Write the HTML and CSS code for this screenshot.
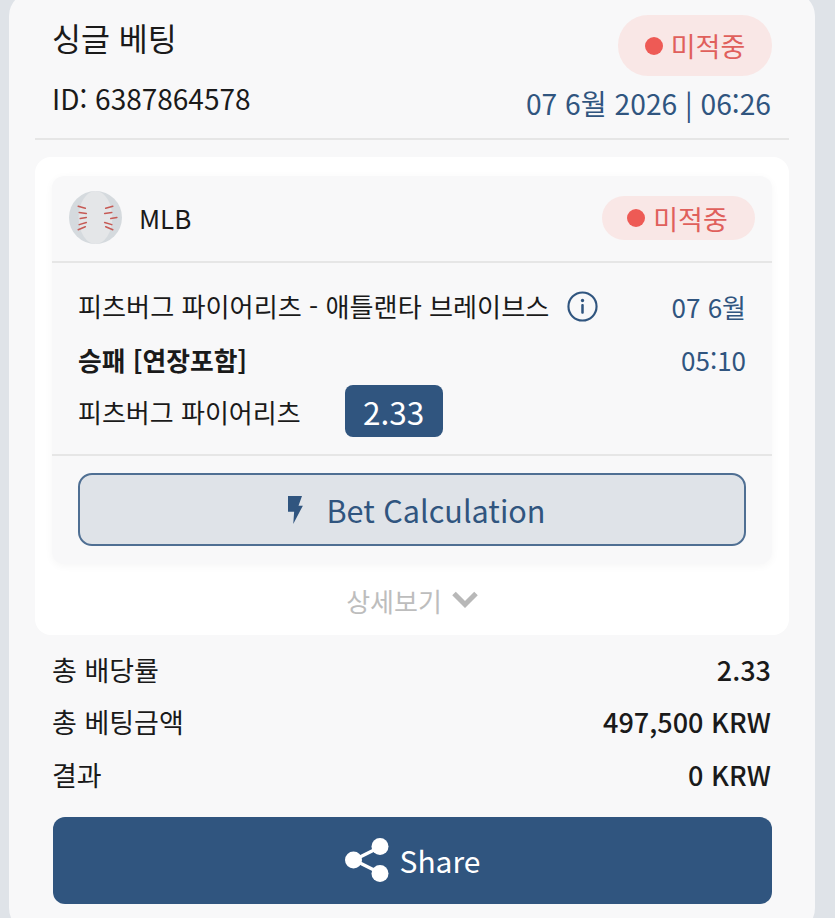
FILE: index.html
```html
<!DOCTYPE html>
<html lang="ko">
<head>
<meta charset="utf-8">
<title>싱글 베팅</title>
<link rel="stylesheet" href="styles.css">
</head>
<body>
<main class="card">
  <header class="head">
    <div class="head-row top">
      <h1 class="title">싱글 베팅</h1>
      <span class="pill pill-lg"><i class="dot"></i>미적중</span>
    </div>
    <div class="head-row meta">
      <span class="id">ID: 6387864578</span>
      <span class="date">07 6월 2026 | 06:26</span>
    </div>
  </header>
  <section class="panel">
    <div class="event">
      <div class="league">
        <div class="league-name">
          <svg class="ball" viewBox="0 0 52 52" aria-hidden="true">
            <circle cx="26" cy="26" r="26" fill="#d5dade"/>
            <ellipse cx="26" cy="26" rx="16.500" ry="26" fill="#e4e6e8"/>
            <g fill="none" stroke="#c65a55" stroke-width="1.500" stroke-linecap="round">
              <path d="M9 15l7 2M10 21l7 1M11 27l6-1M10 33l7-2M9 38l7-3"/>
              <path d="M43 15l-7 2M42 21l-7 1M41 27l6-1M42 33l-7-2M43 38l-7-3"/>
            </g>
          </svg>
          <span class="league-text">MLB</span>
        </div>
        <span class="pill pill-sm"><i class="dot"></i>미적중</span>
      </div>
      <div class="match">
        <div class="match-row first">
          <span class="teams">피츠버그 파이어리츠 - 애틀랜타 브레이브스
            <svg class="info" viewBox="0 0 32 32" aria-hidden="true">
              <circle cx="16" cy="16" r="14.5" fill="none" stroke="#30557f" stroke-width="2.2"/>
              <circle cx="16" cy="9.8" r="1.7" fill="#30557f"/>
              <rect x="14.7" y="13.4" width="2.6" height="10" rx="1" fill="#30557f"/>
            </svg>
          </span>
          <span class="when">07 6월</span>
        </div>
        <div class="match-row">
          <strong class="market">승패 [연장포함]</strong>
          <span class="when">05:10</span>
        </div>
        <div class="pick">
          <span class="pick-name">피츠버그 파이어리츠</span>
          <span class="odds">2.33</span>
        </div>
      </div>
      <div class="calc-wrap">
        <button class="calc" type="button">
          <svg class="bolt" viewBox="0 0 18 32" aria-hidden="true"><path d="M1 0H17L13 11H18L7 32L8 18H1Z" fill="#30557f"/></svg>
          Bet Calculation
        </button>
      </div>
    </div>
    <div class="more">상세보기
      <svg class="chev" viewBox="0 0 26 18" aria-hidden="true"><path d="M2 2.500L13 13.500L24 2.500" fill="none" stroke="#b8b8b8" stroke-width="5"/></svg>
    </div>
  </section>
  <dl class="totals">
    <div class="total"><dt>총 배당률</dt><dd>2.33</dd></div>
    <div class="total"><dt>총 베팅금액</dt><dd>497,500 KRW</dd></div>
    <div class="total"><dt>결과</dt><dd>0 KRW</dd></div>
  </dl>
  <button class="share" type="button">
    <svg class="share-icon" viewBox="0 0 44 44" aria-hidden="true">
      <path d="M35 9L9 22L35 35" fill="none" stroke="#fff" stroke-width="3.400"/>
      <circle cx="35" cy="8.500" r="8.500" fill="#fff"/>
      <circle cx="8.500" cy="22" r="8.500" fill="#fff"/>
      <circle cx="35" cy="35.500" r="8.500" fill="#fff"/>
    </svg>
    Share
  </button>
</main>
</body>
</html>
```
FILE: styles.css
```css
* { box-sizing: border-box; }
html, body { margin: 0; height: 918px; overflow: hidden; }
body {
  background: #dfe3e8;
  color: #1a1a1a;
  font-family: "Noto Sans CJK KR", "Noto Sans", sans-serif;
  padding: 0 20px 0 9px;
}
.card {
  margin-top: -8px;
  height: 940px;
  background: #f8f8f9;
  border-radius: 24px;
  padding: 23px 26px 0;
}
.head { padding: 0 17px; border-bottom: 2px solid #e6e6e6; height: 125px; }
.head-row { display: flex; justify-content: space-between; }
.head-row.top { align-items: flex-start; height: 61px; }
.title { margin: 0; font-size: 31.500px; font-weight: 400; line-height: 44px; }
.pill {
  display: inline-flex; align-items: center; justify-content: center;
  background: #f9e7e6; color: #e0605c;
}
.pill-lg { width: 154px; height: 61px; font-size: 27px; border-radius: 30px; }
.pill-sm { width: 153px; height: 44px; font-size: 27px; border-radius: 22px; margin-top: 12px; padding-right: 2px; }
.dot { width: 18px; height: 18px; border-radius: 50%; background: #ee5a55; margin-right: 8px; }
.meta { align-items: flex-start; }
.id { font-size: 28px; line-height: 40px; margin-top: 2px; }
.date { font-size: 28.200px; line-height: 40px; color: #30557f; margin: 7px 1px 0 0; }
.panel { margin-top: 17px; background: #fff; border-radius: 16px; padding: 19px 17px 0; height: 478px; }
.event { background: #f8f8f9; border-radius: 12px; height: 388px; box-shadow: 0 2px 8px rgba(0,0,0,.04); }
.league { height: 87px; padding: 8px 17px 0; display: flex; justify-content: space-between; align-items: flex-start; border-bottom: 2px solid #e6e6e6; }
.league-name { display: flex; align-items: center; gap: 17px; margin-top: 7px; }
.ball { width: 53px; height: 53px; display: block; }
.league-text { font-size: 26px; }
.match { padding: 16px 26px 0; height: 193px; border-bottom: 2px solid #e6e6e6; }
.match-row { display: flex; justify-content: space-between; align-items: center; height: 52px; }
.match-row.first { height: 54px; }
.teams { font-size: 26.150px; display: flex; align-items: center; gap: 18px; }
.info { width: 31px; height: 31px; }
.market { font-size: 25.800px; font-weight: 700; }
.when { font-size: 26px; color: #30557f; }
.pick { display: flex; align-items: center; gap: 44px; height: 52px; }
.pick-name { font-size: 26px; }
.odds { background: #30557f; color: #fff; font-size: 31.500px; width: 98px; height: 52px; border-radius: 8px; display: flex; align-items: center; justify-content: center; }
.calc-wrap { padding: 17px 26px 0; }
.calc { width: 100%; height: 73px; background: #dfe3e8; border: 2px solid #4f6f93; border-radius: 14px; color: #30557f; font: inherit; font-size: 30.600px; display: flex; align-items: center; justify-content: center; gap: 23px; padding: 0 0 0 9px; }
.bolt { width: 16px; height: 28px; }
.more { display: flex; justify-content: center; align-items: center; gap: 10px; color: #bdbdbd; font-size: 26px; height: 72px; }
.chev { width: 26px; height: 18px; }
.totals { margin: 8px 0 0; padding: 0 18px 0 17px; }
.total { display: flex; justify-content: space-between; align-items: center; height: 52.500px; font-size: 27px; }
.total dd { margin: 0; font-weight: 500; font-size: 27px; }
.share { display: flex; margin: 16px 17px 0 18px; width: 719px; height: 87px; background: #30557f; color: #fff; border: 0; border-radius: 12px; font: inherit; font-size: 30px; align-items: center; justify-content: center; gap: 11px; }
.share-icon { width: 44px; height: 44px; }
```
